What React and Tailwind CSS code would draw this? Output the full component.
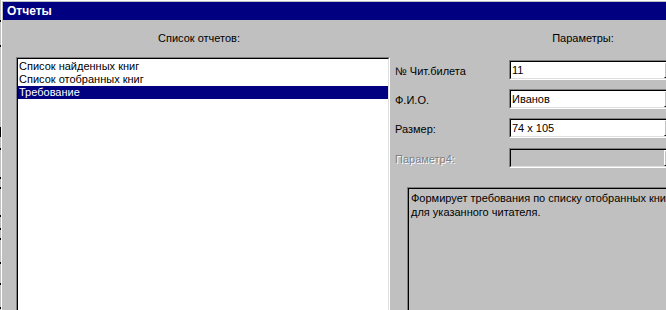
import React from 'react';

const reports = ['Список найденных книг', 'Список отобранных книг', 'Требование'];

const params = [
  { label: '№ Чит.билета', value: '11', top: 'mt-[3px]' },
  { label: 'Ф.И.О.', value: 'Иванов', top: 'mt-[9px]' },
  { label: 'Размер:', value: '74 x 105', top: 'mt-[9px]' },
  { label: 'Параметр4:', value: '', top: 'mt-[10px]', disabled: true },
];

// sunken win95 frame: gray/white outside, black/light inside
const Sunken = ({ className = '', innerClass = '', children }) => (
  <div className={`border-t border-l border-[#808080] border-b border-r border-b-white border-r-white ${className}`}>
    <div className={`h-full border-t border-l border-black border-b border-r border-b-[#dfdfdf] border-r-[#dfdfdf] ${innerClass}`}>
      {children}
    </div>
  </div>
);

const ParamInput = ({ value, disabled }) => (
  <Sunken className="h-[20px]" innerClass="flex">
    <div className={`w-[153px] h-full pl-[1px] leading-[16px] ${disabled ? 'bg-[#c0c0c0]' : 'bg-white'}`}>
      {value}
    </div>
    <div className="w-[16px] h-full border-t border-l border-white border-b border-b-black bg-[#c0c0c0]" />
  </Sunken>
);

const BackgroundTicks = () => (
  <svg width="1" height="310" className="shrink-0">
    <rect x="0" y="0" width="1" height="310" fill="#c0c0c0" />
    {[20, 45, 148, 177, 187, 215, 228, 238, 262, 283, 307].map((y) => (
      <rect key={y} x="0" y={y} width="1" height="2" fill="#000" />
    ))}
    <rect x="0" y="127" width="1" height="10" fill="#000" />
  </svg>
);

export default function App() {
  return (
    <div className="flex h-[310px] w-[666px] overflow-hidden bg-[#c0c0c0] font-['Liberation_Sans',Arial,sans-serif] text-[11px] text-black">
      <BackgroundTicks />

      {/* window */}
      <div className="flex flex-1 flex-col border-l border-t border-white p-[1px] pr-0 pb-0">
        {/* title bar */}
        <div className="flex h-[18px] items-center bg-[#000080] pl-[4px] text-[12px] font-bold text-white">
          Отчеты
        </div>

        <div className="flex">
          {/* reports list */}
          <div className="flex w-[392px] shrink-0 flex-col">
            <div className="flex h-[37px] items-center justify-center">Список отчетов:</div>
            <Sunken className="ml-[13px] h-[260px] w-[374px]" innerClass="bg-white pt-[1px]">
              {reports.map((r, i) => (
                <div
                  key={r}
                  className={`h-[13px] pl-[1px] leading-[13px] ${i === 2 ? 'bg-[#000080] text-white' : ''}`}
                >
                  {r}
                </div>
              ))}
            </Sunken>
          </div>

          {/* parameters */}
          <div className="flex w-[376px] shrink-0 flex-col">
            <div className="flex h-[37px] items-center justify-center">Параметры:</div>
            {params.map((p) => (
              <div key={p.label} className={`flex items-center ${p.top}`}>
                <div
                  className={`w-[114px] shrink-0 pt-[3px] ${
                    p.disabled ? 'text-[#808080] [text-shadow:1px_1px_0_#ffffff]' : ''
                  }`}
                >
                  {p.label}
                </div>
                <ParamInput value={p.value} disabled={p.disabled} />
              </div>
            ))}

            <Sunken className="ml-[12px] mt-[19px] h-[140px] w-[300px]" innerClass="bg-[#c0c0c0] pl-[2px] pt-[2px] leading-[14px]">
              Формирует требования по списку отобранных книг
              <br />
              для указанного читателя.
            </Sunken>
          </div>
        </div>
      </div>
    </div>
  );
}
